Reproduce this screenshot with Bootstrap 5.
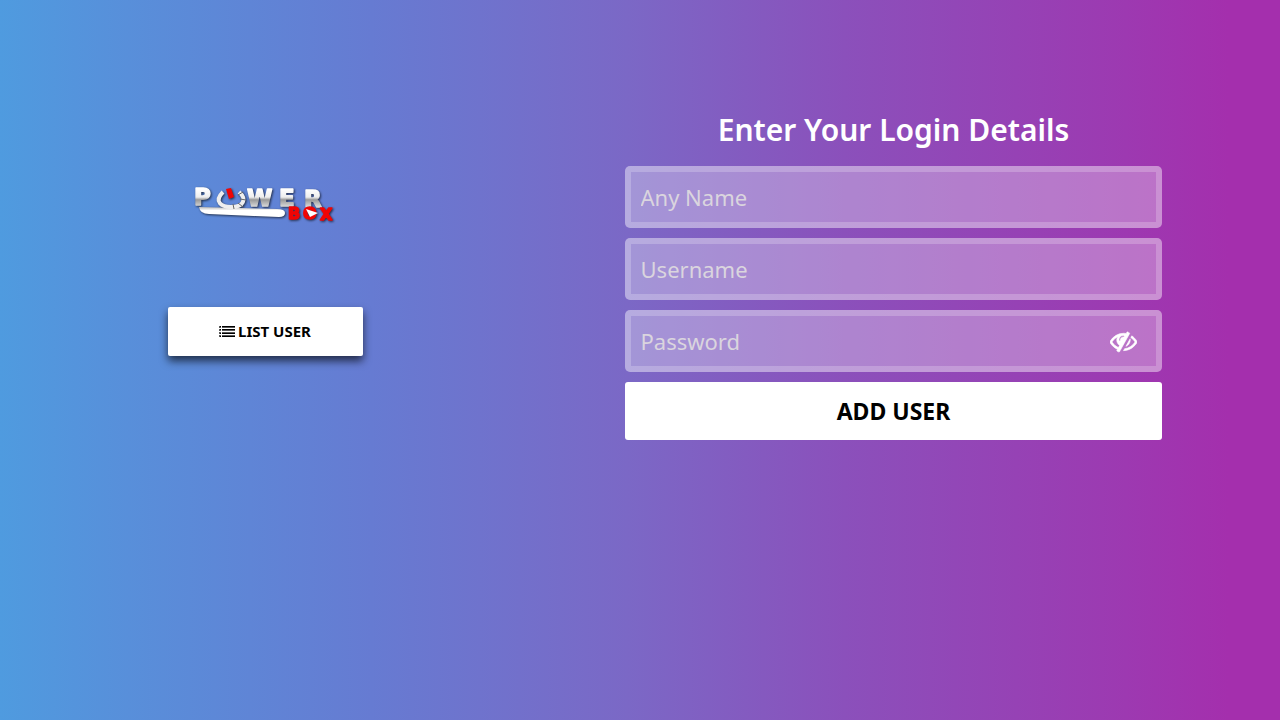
<!DOCTYPE html>
<html lang="en">
<head>
<meta charset="utf-8">
<meta name="viewport" content="width=device-width, initial-scale=1">
<title>Power Box - Add User</title>
<link href="https://cdn.jsdelivr.net/npm/bootstrap@5.3.0/dist/css/bootstrap.min.css" rel="stylesheet">
<style>
  body {
    font-family: "Noto Sans", "Open Sans", sans-serif;
    background: linear-gradient(90deg, #4f9bdf 0%, #588fda 10%, #667bd2 29%, #7b68c6 49%, #8b50bb 66%, #9d39b1 88%, #a42fad 96%, #a42fad 100%) no-repeat;
  }
  .login-grid { padding-right: 23px; }
  .brand-panel { padding-top: 163px; gap: 60px; }
  .form-panel { padding-top: 112px; }
  .brand-logo { filter: drop-shadow(1px 1px 1px rgba(0, 0, 0, .65)); }
  .list-btn {
    width: 195px; height: 49px; border-radius: 2px; gap: 3px;
    font-size: 15px; font-weight: 700;
    box-shadow: 0 5px 8px rgba(0, 0, 0, .65);
  }
  .login-form { width: 74%; gap: 10px; }
  .login-title { font-size: 30px; line-height: 36px; font-weight: 600; margin-bottom: 8px; }
  .field-box, .field-box:focus {
    height: 62px; border: 6px solid rgba(255, 255, 255, .45); border-radius: 5px;
    background-color: rgba(255, 255, 255, .3); color: #fff;
    font-size: 22px; padding: 0 10px;
  }
  .field-box::placeholder { color: #dad5de; }
  .eye-btn { right: 25px; color: #fff; }
  .add-btn { height: 58px; border-radius: 3px; font-size: 23px; font-weight: 700; }
  @media (min-width: 768px) {
    .login-grid { display: grid; grid-template-columns: 530fr 727fr; }
  }
</style>
</head>
<body class="min-vh-100">
<main class="login-grid">
  <section class="brand-panel d-flex flex-column align-items-center">
    <svg class="brand-logo" width="160" height="84" viewBox="0 0 160 84" role="img" aria-label="Power Box">
      <defs>
        <linearGradient id="steel" gradientUnits="userSpaceOnUse" x1="0" y1="26" x2="0" y2="44">
          <stop offset="0" stop-color="#fff"/><stop offset="0.45" stop-color="#eee"/>
          <stop offset="0.6" stop-color="#999"/><stop offset="1" stop-color="#ddd"/>
        </linearGradient>
        <linearGradient id="bar" x1="0" y1="0" x2="0" y2="1">
          <stop offset="0" stop-color="#bbb"/><stop offset="0.35" stop-color="#fff"/><stop offset="1" stop-color="#fff"/>
        </linearGradient>
      </defs>
      <path d="M14 44L92 46Q100 46 100 50Q100 54 94 54L24 51Q15 51 14 44Z" fill="url(#bar)"/>
      <text font-family="DejaVu Sans" font-weight="700" stroke-width="1.5" stroke-linejoin="round"><tspan x="9 62 94 119" y="42 43 43 44" font-size="23" fill="url(#steel)" stroke="url(#steel)">PWER</tspan><tspan x="103 118 135" y="56 56 57" font-size="16" fill="#f00505" stroke="#f00505">BOX</tspan></text>
      <path d="M121 46L133 50L125 54Z" fill="#fff"/>
      <path d="M38 29C28 39 37 44 46 44C59 44 62 36 54 29" fill="none" stroke="#eee" stroke-width="4"/>
      <path d="M48 41L49 46M53 40L58 44M55 36L61 37M53 32L58 29" stroke="#666" stroke-width="1"/>
      <path d="M41 26L46 25L49 34L44 36Z" fill="#f00505"/>
    </svg>
    <button type="button" class="list-btn btn btn-light bg-white border-0 text-black d-flex align-items-center justify-content-center p-0">
      <svg width="16" height="16" viewBox="0 0 16 16" fill="currentColor" aria-hidden="true">
        <path d="M1 2h1v1H1zM3 2h13v1H3zM1 5h1v1H1zM3 5h13v1H3zM1 9h1v1H1zM3 9h13v1H3zM1 12h1v1H1zM3 12h13v1H3z"/>
        <path d="M0 2h2v2H0zM3 3h13v1H3zM0 5h2v2H0zM3 6h13v1H3zM0 8h2v2H0zM3 8h13v1H3zM0 11h2v2H0zM3 11h13v1H3z" opacity=".65"/>
      </svg>
      <span>LIST USER</span>
    </button>
  </section>
  <section class="form-panel d-flex justify-content-center">
    <form class="login-form d-flex flex-column">
      <h1 class="login-title text-white text-center">Enter Your Login Details</h1>
      <input class="field-box form-control shadow-none" type="text" placeholder="Any Name" aria-label="Any Name">
      <input class="field-box form-control shadow-none" type="text" placeholder="Username" aria-label="Username">
      <div class="position-relative">
        <input class="field-box form-control shadow-none" type="password" placeholder="Password" aria-label="Password">
        <button type="button" class="eye-btn btn border-0 p-0 d-flex position-absolute top-50 translate-middle-y" aria-label="Show password">
          <svg width="27" height="27" viewBox="0 0 1792 1792" fill="currentColor" stroke="currentColor" stroke-width="40" aria-hidden="true">
            <path d="M555 1335l78-141q-87-63-136-159t-49-203q0-121 61-225-229 117-381 353 167 258 427 375zm389-759q0-20-14-34t-34-14q-125 0-214.5 89.5t-89.5 214.5q0 20 14 34t34 14 34-14 14-34q0-86 61-147t147-61q20 0 34-14t14-34zm363-191q0 7-1 9-106 189-316 567t-315 566l-49 89q-10 16-28 16-12 0-134-70-16-10-16-28 0-12 44-87-143-65-263.5-173t-208.5-245q-20-31-20-69t20-69q153-235 380-371t496-136q89 0 180 17l54-97q10-16 28-16 5 0 18 6t31 15.5 33 18.5 31.5 18.5 19.5 11.5q16 10 16 27zm37 447q0 139-79 253.5t-209 164.5l280-502q8 45 8 84zm448 128q0 35-20 69-39 64-109 145-150 172-347.5 267t-419.5 95l74-132q212-18 392.5-137t301.5-307q-115-179-282-294l63-112q95 64 182.5 153t144.5 184q20 34 20 69z"/>
          </svg>
        </button>
      </div>
      <button type="submit" class="add-btn btn btn-light bg-white border-0 text-black p-0">ADD USER</button>
    </form>
  </section>
</main>
<script src="https://cdn.jsdelivr.net/npm/bootstrap@5.3.0/dist/js/bootstrap.bundle.min.js"></script>
</body>
</html>
